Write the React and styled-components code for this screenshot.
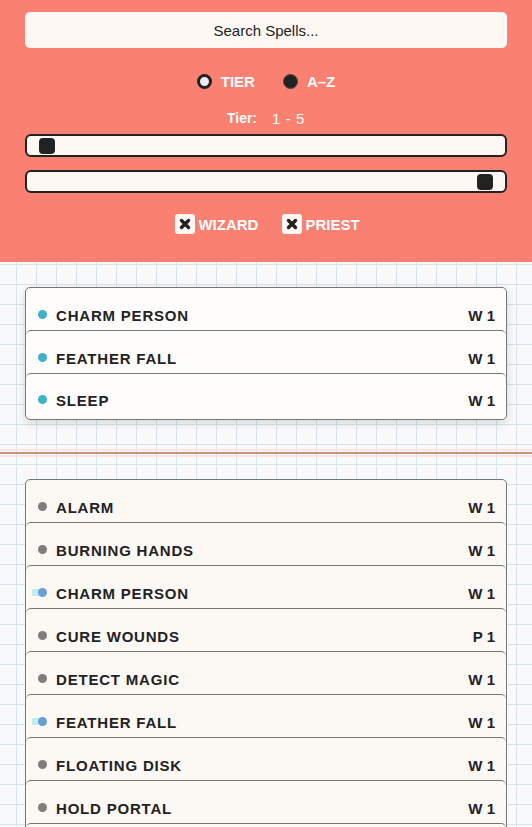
import React from "react";
import styled, { createGlobalStyle } from "styled-components";

const GlobalStyle = createGlobalStyle`
  body {
    margin: 0;
    font-family: "Liberation Sans", Arial, sans-serif;
    background: #f7f9fb;
  }
`;

const selected = [
  { name: "CHARM PERSON", tier: "W 1" },
  { name: "FEATHER FALL", tier: "W 1" },
  { name: "SLEEP", tier: "W 1" },
];

const spells = [
  { name: "ALARM", tier: "W 1" },
  { name: "BURNING HANDS", tier: "W 1" },
  { name: "CHARM PERSON", tier: "W 1", picked: true },
  { name: "CURE WOUNDS", tier: "P 1" },
  { name: "DETECT MAGIC", tier: "W 1" },
  { name: "FEATHER FALL", tier: "W 1", picked: true },
  { name: "FLOATING DISK", tier: "W 1" },
  { name: "HOLD PORTAL", tier: "W 1" },
  { name: "LIGHT", tier: "W 1" },
];

function CrossIcon() {
  return (
    <svg width="12" height="12" viewBox="0 0 12 12">
      <path
        d="M2.5 2.5 L9.5 9.5 M9.5 2.5 L2.5 9.5"
        stroke="#222"
        strokeWidth="3.4"
        strokeLinecap="round"
      />
    </svg>
  );
}

function SpellRow({ spell, dot }) {
  return (
    <Row>
      <Dot color={dot} $glow={spell.picked} />
      <Name>{spell.name}</Name>
      <TierTag>{spell.tier}</TierTag>
    </Row>
  );
}

export default function App() {
  return (
    <Page>
      <GlobalStyle />
      <Header>
        <SearchBox>Search Spells...</SearchBox>

        <RadioRow>
          <RadioLabel>
            <Radio $checked />
            TIER
          </RadioLabel>
          <RadioLabel>
            <Radio />
            A–Z
          </RadioLabel>
        </RadioRow>

        <TierLine>
          <b>Tier:</b>
          <span>1 - 5</span>
        </TierLine>

        <Slider>
          <Thumb />
        </Slider>
        <Slider $end>
          <Thumb />
        </Slider>

        <CheckRow>
          <CheckLabel>
            <CheckBox>
              <CrossIcon />
            </CheckBox>
            WIZARD
          </CheckLabel>
          <CheckLabel>
            <CheckBox>
              <CrossIcon />
            </CheckBox>
            PRIEST
          </CheckLabel>
        </CheckRow>
      </Header>

      <Board>
        <Card $lifted>
          {selected.map((s) => (
            <SpellRow key={s.name} spell={s} dot="#3bb3c9" />
          ))}
        </Card>

        <Divider />

        <Card $cream>
          {spells.map((s) => (
            <SpellRow key={s.name} spell={s} dot={s.picked ? "#6a9ed6" : "#827d7d"} />
          ))}
        </Card>
      </Board>
    </Page>
  );
}

const Page = styled.div`
  min-height: 100vh;
`;

const Header = styled.header`
  background: #fa8072;
  padding: 12px 25px 0;
  height: 250px;
  display: flex;
  flex-direction: column;
  align-items: stretch;
`;

const SearchBox = styled.div`
  height: 36px;
  border-radius: 5px;
  background: #fdf8f3;
  display: flex;
  align-items: center;
  justify-content: center;
  font-size: 15px;
  color: #222;
`;

const RadioRow = styled.div`
  display: flex;
  justify-content: center;
  gap: 28px;
  margin-top: 24px;
  height: 18px;
  align-items: center;
`;

const RadioLabel = styled.label`
  display: flex;
  align-items: center;
  gap: 9px;
  color: #fff;
  font-weight: bold;
  font-size: 15px;
`;

const Radio = styled.span`
  width: 15px;
  height: 15px;
  border-radius: 50%;
  box-sizing: border-box;
  background: ${(p) => (p.$checked ? "#e9eef4" : "#222")};
  border: ${(p) => (p.$checked ? "3px solid #222" : "1px solid #444")};
`;

const TierLine = styled.div`
  display: flex;
  justify-content: center;
  gap: 15px;
  margin-top: 19px;
  color: #fff;
  font-size: 15px;
  height: 18px;
  align-items: center;

  b {
    font-weight: bold;
    font-size: 14px;
  }

  span {
    letter-spacing: 0.6px;
  }
`;

const Slider = styled.div`
  margin-top: ${(p) => (p.$end ? "13px" : "7px")};
  height: 23px;
  box-sizing: border-box;
  border: 2px solid #222;
  border-radius: 6px;
  background: #fdf8f3;
  display: flex;
  align-items: center;
  justify-content: ${(p) => (p.$end ? "flex-end" : "flex-start")};
  padding: 0 12px;
`;

const Thumb = styled.span`
  width: 16px;
  height: 16px;
  border-radius: 4px;
  background: #222;
`;

const CheckRow = styled.div`
  display: flex;
  justify-content: center;
  gap: 24px;
  margin-top: 21px;
  padding-left: 3px;
`;

const CheckLabel = styled.label`
  display: flex;
  align-items: center;
  gap: 3px;
  color: #fff;
  font-weight: bold;
  font-size: 15px;
`;

const CheckBox = styled.span`
  width: 20px;
  height: 20px;
  border-radius: 3px;
  background: #fdf8f3;
  display: flex;
  align-items: center;
  justify-content: center;
`;

const Board = styled.main`
  padding: 25px 25px 40px;
  background-color: #f8f9fb;
  background-image: linear-gradient(to right, #d7e2ea 1px, transparent 1px),
    linear-gradient(to bottom, #d7e2ea 1px, transparent 1px);
  background-size: 20px 20px;
  background-position: 16px 2px;
`;

const Card = styled.section`
  border: 1px solid #777;
  border-radius: 5px;
  background: ${(p) => (p.$cream ? "#fcf8f4" : "#fffdfb")};
  box-shadow: ${(p) => (p.$lifted ? "0 3px 10px rgba(0, 0, 0, 0.14)" : "none")};
  overflow: hidden;
`;

const Row = styled.div`
  position: relative;
  z-index: 0;
  height: 43px;
  box-sizing: border-box;
  display: flex;
  align-items: flex-end;
  padding: 0 11px 6px 12px;
  border-top: 1px solid #777;
  border-radius: 5px 5px 0 0;

  &:first-child {
    border-top: none;
    height: 42px;
  }

  &:last-child {
    height: 46px;
    padding-bottom: 10px;
  }
`;

const Dot = styled.span`
  position: relative;
  width: 9px;
  height: 9px;
  border-radius: 50%;
  background: ${(p) => p.color};
  margin-right: 9px;
  margin-bottom: 5px;
  flex-shrink: 0;

  &::before {
    content: "";
    display: ${(p) => (p.$glow ? "block" : "none")};
    position: absolute;
    left: -6px;
    top: 1px;
    width: 10px;
    height: 7px;
    background: #bdeef0;
    z-index: -1;
  }
`;

const Name = styled.span`
  flex: 1;
  font-weight: bold;
  font-size: 15px;
  letter-spacing: 0.8px;
  color: #222;
`;

const TierTag = styled.span`
  font-weight: bold;
  font-size: 15px;
  color: #222;
`;

const Divider = styled.hr`
  margin: 32px -25px 25px;
  border: none;
  height: 2px;
  background: #c3967a;
  box-shadow: 0 -3px 0 0 #fce3e9, 0 3px 0 0 #fce3e9;
`;
